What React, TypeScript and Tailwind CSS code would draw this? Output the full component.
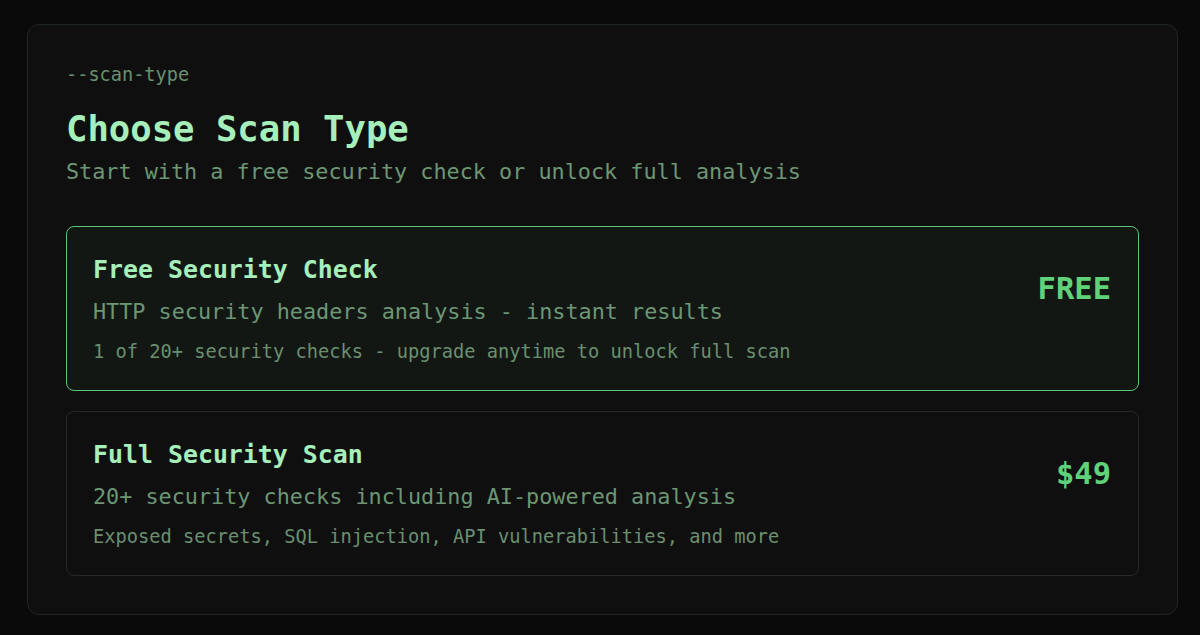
const mono = { fontFamily: '"DejaVu Sans Mono", "Liberation Mono", monospace' };

interface ScanOption {
  id: string;
  title: string;
  summary: string;
  detail: string;
  price: string;
}

const options: ScanOption[] = [
  {
    id: 'free',
    title: 'Free Security Check',
    summary: 'HTTP security headers analysis - instant results',
    detail: '1 of 20+ security checks - upgrade anytime to unlock full scan',
    price: 'FREE',
  },
  {
    id: 'full',
    title: 'Full Security Scan',
    summary: '20+ security checks including AI-powered analysis',
    detail: 'Exposed secrets, SQL injection, API vulnerabilities, and more',
    price: '$49',
  },
];

export default function App() {
  const selected = 'free';

  return (
    <div className="min-h-screen bg-[#0a0a0a] pt-[24px] pl-[27px]" style={mono}>
      <div className="w-[1151px] rounded-[12px] border border-[#1f2820] bg-[#0f0f0f] px-[38px] pt-[38px] pb-[38px]">
        {/* Header */}
        <p className="text-[18.6px] leading-[24px] text-[#6a8f70]">--scan-type</p>
        <h2 className="mt-[20px] text-[35.6px] leading-[44px] font-bold text-[#a6efbb]">Choose Scan Type</h2>
        <p className="mt-[7px] text-[21.8px] leading-[28px] text-[#6c9674]">
          Start with a free security check or unlock full analysis
        </p>

        {/* Options */}
        <div className="mt-[40px] flex flex-col gap-[20px]">
          {options.map((opt) => {
            const active = opt.id === selected;
            return (
              <div
                key={opt.id}
                className={`flex items-start justify-between rounded-[8px] border pl-[26px] pr-[27px] pt-[27px] pb-[25px] ${
                  active ? 'border-[#5ec575] bg-[#121714]' : 'border-[#232b24] bg-[#0f0f0f]'
                }`}
              >
                <div className="flex flex-col">
                  <h3 className="text-[24.9px] leading-[32px] font-bold text-[#a6efbb]">{opt.title}</h3>
                  <p className="mt-[11px] text-[21.8px] leading-[30px] text-[#6c9674]">{opt.summary}</p>
                  <p className="mt-[12px] text-[18.7px] leading-[26px] text-[#6a8f70]">{opt.detail}</p>
                </div>
                <span className="mt-[15px] text-[30.5px] leading-[40px] font-bold text-[#5fd27a]">{opt.price}</span>
              </div>
            );
          })}
        </div>
      </div>
    </div>
  );
}
